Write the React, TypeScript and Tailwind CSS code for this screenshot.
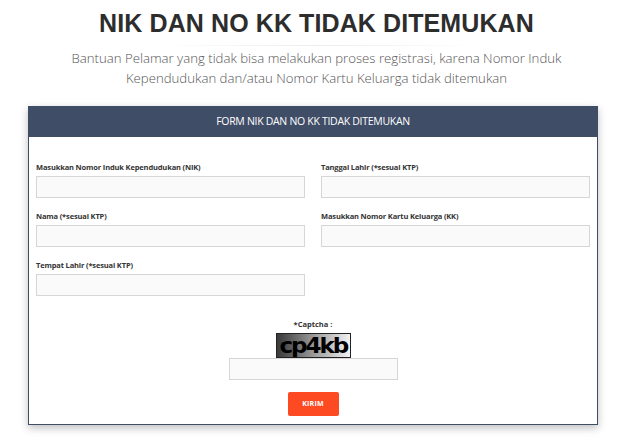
import React from 'react';

const labelCls = "block text-[7.5px] leading-[10px] font-bold text-[#333] mb-[4px] tracking-[-0.15px]";
const inputCls = "block w-full h-[22px] bg-[#fafafa] border border-[#d6d6d6] outline-none";

function Field({ label }: { label: string }) {
  return (
    <div>
      <label className={labelCls}>{label}</label>
      <input className={inputCls} />
    </div>
  );
}

export default function App() {
  return (
    <div className="w-[633px] h-[444px] bg-white overflow-hidden font-['Open_Sans',sans-serif]">
      <header className="pt-[8px] text-center">
        <h1 className="font-['Liberation_Sans',Arial,sans-serif] font-bold text-[25px] leading-[30px] text-[#2d2d2d] tracking-[0.1px]">
          NIK DAN NO KK TIDAK DITEMUKAN
        </h1>
        <div className="mx-auto mt-[7px] w-[320px] h-px bg-gradient-to-r from-transparent via-[#ececec] to-transparent" />
        <p className="mt-[2px] text-[13.2px] leading-[20px] font-light text-[#555]">
          Bantuan Pelamar yang tidak bisa melakukan proses registrasi, karena Nomor Induk
          <br />
          Kependudukan dan/atau Nomor Kartu Keluarga tidak ditemukan
        </p>
      </header>

      <div className="mx-[28px] mt-[18px] w-[570px] border border-[#3f4d67] shadow-[0_3px_8px_rgba(0,0,0,0.25)]">
        <div className="h-[30px] bg-[#3f4d67] flex items-center justify-center text-white text-[10.5px] font-medium tracking-[-0.3px]">
          FORM NIK DAN NO KK TIDAK DITEMUKAN
        </div>
        <div className="bg-white px-[7px] pt-[25px] pb-[8px]">
          <div className="grid grid-cols-2 gap-x-[16px] gap-y-[13px]">
            <Field label="Masukkan Nomor Induk Kependudukan (NIK)" />
            <Field label="Tanggal Lahir (*sesuai KTP)" />
            <Field label="Nama (*sesuai KTP)" />
            <Field label="Masukkan Nomor Kartu Keluarga (KK)" />
            <Field label="Tempat Lahir (*sesuai KTP)" />
          </div>

          <div className="mt-[23px] flex flex-col items-center">
            <label className="text-[7.5px] leading-[10px] font-bold text-[#333] mb-[4px]">*Captcha :</label>
            <div className="w-[75px] h-[25px] border border-[#222] bg-gradient-to-r from-[#3a3a3a] via-[#9a9a9a] to-[#f2f2f2] flex items-center justify-center">
              <span className="font-['DejaVu_Sans',sans-serif] font-bold text-[22px] leading-[22px] text-black tracking-[-2px] scale-x-[1.05]">
                cp4kb
              </span>
            </div>
            <input className="block w-[169px] h-[22px] bg-[#fafafa] border border-[#d6d6d6] outline-none" />
            <button className="mt-[12px] w-[51px] h-[24px] rounded-[2px] bg-[#fd4a22] text-white text-[7px] font-bold tracking-[0.2px]">
              KIRIM
            </button>
          </div>
        </div>
      </div>
    </div>
  );
}
